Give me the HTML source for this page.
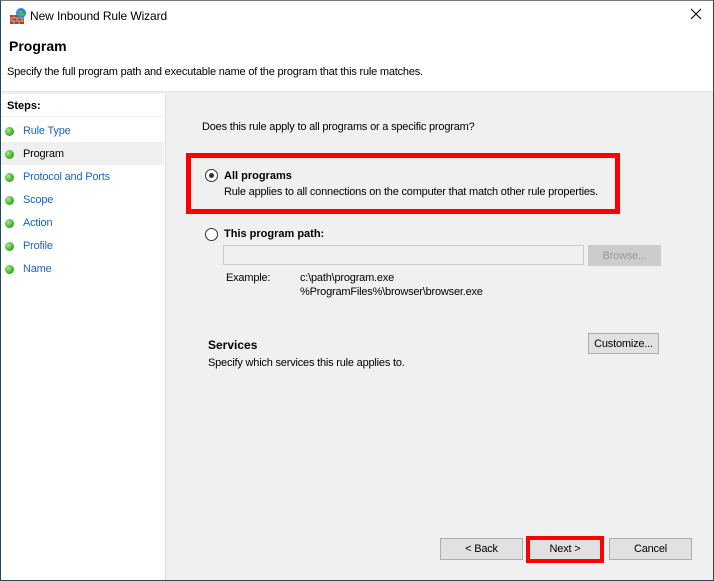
<!DOCTYPE html>
<html><head><meta charset="utf-8"><style>
*{margin:0;padding:0;box-sizing:border-box}
body{width:714px;height:581px;overflow:hidden;background:#fff;font-family:"Liberation Sans",sans-serif;font-size:11px;line-height:16px;letter-spacing:-0.2px;color:#000;position:relative}
.a{position:absolute;white-space:nowrap}
.frame{position:absolute;left:0;top:0;width:714px;height:581px;border:1px solid #777;border-right-color:#1d4a63;border-bottom-color:#1d4a63;border-left-color:#1d4a63}
.btn{position:absolute;background:#e1e1e1;border:1px solid #adadad;text-align:center;font-size:11px}
.dot{position:absolute;left:5px;width:9px;height:9px;border-radius:50%;background:radial-gradient(circle at 35% 35%,#a8e88a,#3fb02a 60%,#2a8a1c)}
.link{color:#1a64c8}
.radio{position:absolute;width:13px;height:13px;border:1px solid #333;border-radius:50%;background:#fff}
b{letter-spacing:0}
</style></head><body>
<div class="a" style="left:0;top:0;width:714px;height:91px;background:#fff"></div>
<svg class="a" style="left:9px;top:7px" width="18" height="18" viewBox="0 0 18 18">
<rect x="1" y="8" width="14" height="9" fill="#a0442a"/>
<path d="M1 11h14M1 14h14M5 8v3M10 8v3M3 11v3M8 11v3M13 11v3M5 14v3M10 14v3" stroke="#e8c0a8" stroke-width="0.8"/>
<circle cx="12" cy="6" r="5" fill="#2a8ad8"/><path d="M9 4c2 0 3 2 5 1M9 7c2 1 4 0 6 1" stroke="#6cc04a" stroke-width="1.5" fill="none"/>
</svg>
<div class="a" style="left:30px;top:8px;font-size:12px;letter-spacing:-0.1px">New Inbound Rule Wizard</div>
<svg class="a" style="left:690px;top:8px" width="12" height="12"><path d="M1 1L11 11M11 1L1 11" stroke="#000" stroke-width="1.1"/></svg>
<div class="a" style="left:9px;top:38px;font-size:14px;font-weight:bold;letter-spacing:0">Program</div>
<div class="a" style="left:7px;top:64px">Specify the full program path and executable name of the program that this rule matches.</div>
<div class="a" style="left:0;top:91px;width:714px;height:1px;background:#e3e3e3"></div>
<div class="a" style="left:1px;top:92px;width:712px;height:488px;background:#f0f0f0"></div>
<div class="a" style="left:1px;top:94px;width:165px;height:486px;background:#fff;border-right:1px solid #e0e0e0"></div>
<div class="a" style="left:7px;top:98px;font-weight:bold;letter-spacing:0">Steps:</div>
<div class="a" style="left:1px;top:116px;width:164px;height:1px;background:#f0f0f0"></div>
<div class="a" style="left:1px;top:142px;width:163px;height:23px;background:#f0f0f0"></div>
<div class="dot" style="top:127px"></div><div class="a link" style="left:23px;top:123px">Rule Type</div>
<div class="dot" style="top:150px"></div><div class="a" style="left:23px;top:146px">Program</div>
<div class="dot" style="top:173px"></div><div class="a link" style="left:23px;top:169px">Protocol and Ports</div>
<div class="dot" style="top:196px"></div><div class="a link" style="left:23px;top:192px">Scope</div>
<div class="dot" style="top:219px"></div><div class="a link" style="left:23px;top:215px">Action</div>
<div class="dot" style="top:242px"></div><div class="a link" style="left:23px;top:238px">Profile</div>
<div class="dot" style="top:265px"></div><div class="a link" style="left:23px;top:261px">Name</div>

<div class="a" style="left:202px;top:119px">Does this rule apply to all programs or a specific program?</div>
<div class="a" style="left:186px;top:153px;width:434px;height:61px;border:5px solid #f00"></div>
<div class="radio" style="left:205px;top:169px"></div>
<div class="a" style="left:209px;top:173px;width:5px;height:5px;border-radius:50%;background:#333"></div>
<div class="a" style="left:224px;top:168px"><b>All programs</b></div>
<div class="a" style="left:224px;top:184px">Rule applies to all connections on the computer that match other rule properties.</div>
<div class="radio" style="left:205px;top:228px"></div>
<div class="a" style="left:224px;top:226px"><b>This program path:</b></div>
<div class="a" style="left:223px;top:245px;width:361px;height:20px;border:1px solid #ccc;background:#f0f0f0"></div>
<div class="btn" style="left:588px;top:245px;width:73px;height:21px;line-height:21px;color:#999;border-color:#ccc;background:#ccc">Browse...</div>
<div class="a" style="left:226px;top:270px">Example:</div>
<div class="a" style="left:300px;top:270px">c:\path\program.exe</div>
<div class="a" style="left:300px;top:284px">%ProgramFiles%\browser\browser.exe</div>
<div class="a" style="left:208px;top:337px;font-size:12px"><b>Services</b></div>
<div class="a" style="left:208px;top:355px">Specify which services this rule applies to.</div>
<div class="btn" style="left:588px;top:333px;width:71px;height:21px;line-height:21px">Customize...</div>

<div class="btn" style="left:440px;top:538px;width:83px;height:22px;line-height:21px">&lt; Back</div>
<div class="a" style="left:526px;top:536px;width:78px;height:27px;border:4px solid #f00"></div>
<div class="btn" style="left:530px;top:540px;width:70px;height:19px;line-height:19px;border:none">Next &gt;</div>
<div class="btn" style="left:609px;top:538px;width:83px;height:22px;line-height:21px">Cancel</div>
<div class="frame"></div>
</body></html>
